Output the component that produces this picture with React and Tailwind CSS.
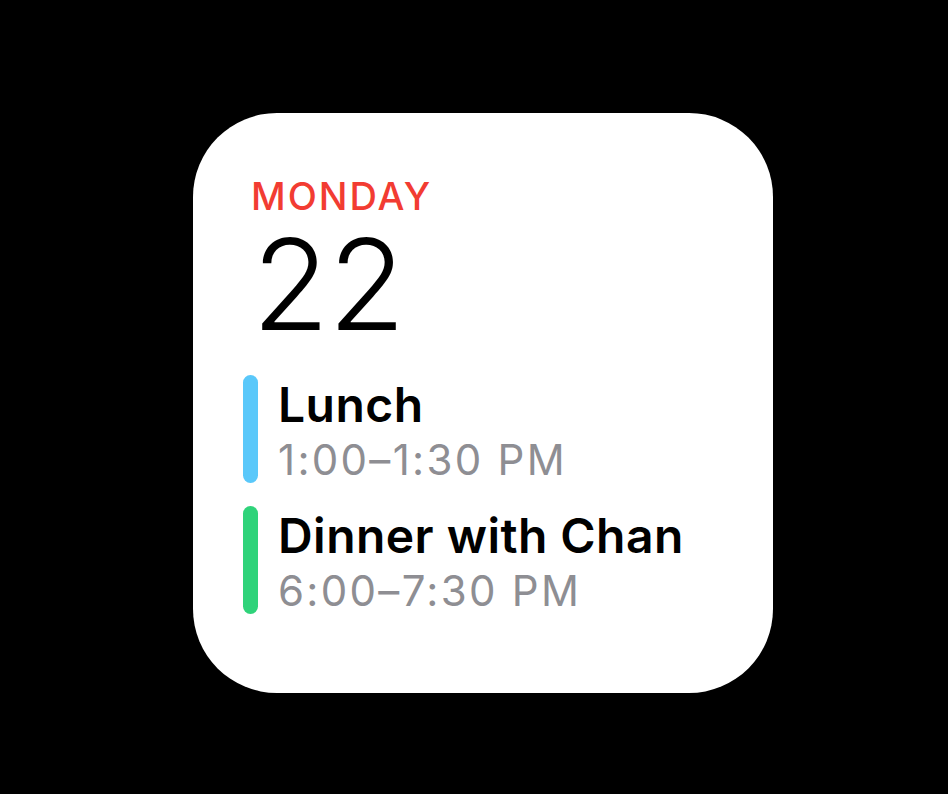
export default function App() {
  const events = [
    { title: "Lunch", time: "1:00–1:30 PM", color: "bg-[#5ac8fa]" },
    { title: "Dinner with Chan", time: "6:00–7:30 PM", color: "bg-[#2fd37a]" },
  ];
  return (
    <div className="w-[948px] h-[794px] bg-black flex items-start justify-start" style={{ fontFamily: "Inter, 'Noto Sans', sans-serif" }}>
      <div className="ml-[193px] mt-[113px] w-[580px] h-[580px] bg-white rounded-[84px] pl-[58px] pt-[59px] flex flex-col">
        <div className="text-[38px] leading-[48px] font-medium text-[#f23c32] tracking-[2px]">MONDAY</div>
        <div className="text-[126px] leading-[120px] font-light text-black mt-[4px] ml-[1px] tracking-[-1px]">22</div>
        <div className="mt-[31px] flex flex-col gap-[17px] -ml-[8px]">
          {events.map((e) => (
            <div key={e.title} className="flex items-start gap-[20px]">
              <div className={`w-[15px] h-[108px] rounded-full shrink-0 ${e.color}`} />
              <div className="flex flex-col pt-[4px]">
                <div className="text-[48px] leading-[52px] font-semibold text-black tracking-[0.45px] whitespace-nowrap">{e.title}</div>
                <div className="text-[42px] leading-[58px] font-normal text-[#8e8e93] tracking-[2.3px] whitespace-nowrap">{e.time}</div>
              </div>
            </div>
          ))}
        </div>
      </div>
    </div>
  );
}
